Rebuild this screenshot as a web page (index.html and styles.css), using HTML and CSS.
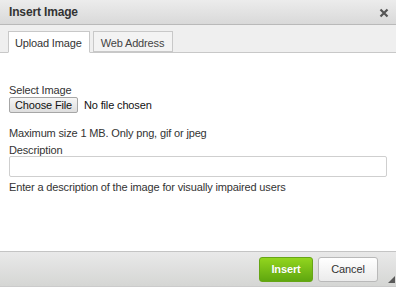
FILE: index.html
```html
<!DOCTYPE html>
<html>
<head>
<meta charset="utf-8">
<title>Insert Image</title>
<link rel="stylesheet" href="styles.css">
</head>
<body>
<div class="dialog">
  <div class="titlebar">
    <span class="title">Insert Image</span>
    <svg class="close" width="10" height="10" viewBox="0 0 10 10"><path d="M1.5 1.5 L8.5 8.5 M8.5 1.5 L1.5 8.5" stroke="#555" stroke-width="2.2"/></svg>
  </div>
  <div class="tabs">
    <div class="tab active">Upload Image</div>
    <div class="tab">Web Address</div>
  </div>
  <div class="content">
    <div class="label">Select Image</div>
    <div class="file-row">
      <span class="file-btn">Choose File</span>
      <span class="file-status">No file chosen</span>
    </div>
    <div class="hint-top">Maximum size 1 MB. Only png, gif or jpeg</div>
    <div class="label desc">Description</div>
    <div class="input"></div>
    <div class="hint">Enter a description of the image for visually impaired users</div>
  </div>
  <div class="footer">
    <span class="btn insert">Insert</span>
    <span class="btn cancel">Cancel</span>
    <svg class="grip" width="7" height="7" viewBox="0 0 7 7"><path d="M7 0 L7 7 L0 7 Z" fill="#5a5a5a"/></svg>
  </div>
</div>
</body>
</html>
```
FILE: styles.css
```css
* { box-sizing: border-box; }
html, body { margin: 0; padding: 0; background: #fff; }
body {
  font-family: "Liberation Sans", Arial, sans-serif;
  font-size: 11px;
  letter-spacing: -0.15px;
  color: #333;
}
.dialog {
  width: 396px;
  height: 287px;
  display: flex;
  flex-direction: column;
  position: relative;
}
.titlebar {
  height: 25px;
  border-bottom: 1px solid #b9b9b9;
  background: linear-gradient(#ececec, #d9d9d9);
  display: flex;
  align-items: center;
  justify-content: space-between;
  padding: 0 7px 0 9px;
}
.title {
  font-size: 12px;
  font-weight: bold;
  color: #333;
  line-height: 24px;
}
.close { margin-top: 1px; }
.tabs {
  height: 28px;
  background: #efefef;
  border-bottom: 1px solid #c8c8c8;
  padding: 6px 0 0 8px;
  display: flex;
  gap: 3px;
}
.tab {
  margin-bottom: -1px;
  border: 1px solid #c8c8c8;
  padding: 2px 8px 0 7px;
  line-height: 19px;
  background: #f3f3f3;
  color: #444;
  height: 21px;
}
.tab.active {
  background: #fff;
  border-bottom-color: #fff;
  height: 22px;
  color: #333;
  padding: 2px 7px 0 6px;
}
.content {
  flex: 1;
  padding: 31px 9px 0 9px;
}
.label { line-height: 13px; }
.file-row {
  display: flex;
  align-items: center;
  height: 16px;
}
.file-btn {
  width: 69px;
  height: 16px;
  border: 1px solid #a6a6a6;
  border-radius: 2px;
  background: linear-gradient(#f6f6f6, #dedede);
  text-align: center;
  line-height: 14px;
  color: #111;
}
.file-status { margin-left: 6px; color: #111; line-height: 14px; }
.hint-top { margin-top: 14px; line-height: 13px; }
.desc { margin-top: 4px; line-height: 12px; }
.input {
  height: 21px;
  width: 378px;
  border: 1px solid #cfcfcf;
  border-radius: 2px;
  background: #fff;
}
.hint { margin-top: 4px; line-height: 13px; }
.footer {
  height: 36px;
  border-top: 1px solid #c4c4c4;
  border-bottom: 1px solid #cbcbcb;
  background: linear-gradient(#e9e9e9, #d5d6d4);
  display: flex;
  justify-content: flex-end;
  align-items: flex-start;
  padding: 5px 18px 0 0;
  gap: 5px;
  position: relative;
}
.btn {
  height: 25px;
  line-height: 23px;
  border-radius: 3px;
  text-align: center;
}
.insert {
  width: 54px;
  border: 1px solid #66a515;
  background: linear-gradient(#92d51e, #5fa70f);
  color: #fff;
  font-weight: bold;
  text-shadow: 0 0 1px rgba(0,0,0,0.15);
}
.cancel {
  width: 60px;
  border: 1px solid #b9b9b9;
  background: linear-gradient(#ffffff, #ebebeb);
  color: #333;
}
.grip {
  position: absolute;
  right: 1px;
  bottom: 3px;
}
```
